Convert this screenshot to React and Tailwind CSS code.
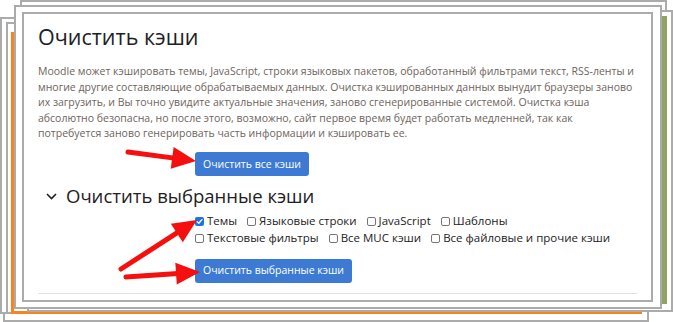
import React from "react";

function Box({ checked }) {
  if (checked) {
    return (
      <span className="inline-flex w-[9px] h-[9px] rounded-[2px] bg-[#1a73e8] items-center justify-center shrink-0">
        <svg width="7" height="7" viewBox="0 0 8 8">
          <path d="M1.3 4.2 L3.2 6 L6.8 1.8" fill="none" stroke="white" strokeWidth="1.5" strokeLinecap="round" strokeLinejoin="round" />
        </svg>
      </span>
    );
  }
  return <span className="inline-block w-[9px] h-[9px] rounded-[2px] border border-[#767676] bg-white shrink-0" />;
}

function Check({ label, checked }) {
  return (
    <span className="inline-flex items-center gap-[3px] whitespace-nowrap">
      <Box checked={checked} />
      <span>{label}</span>
    </span>
  );
}

function Arrow({ x1, y1, x2, y2 }) {
  const dx = x2 - x1, dy = y2 - y1;
  const len = Math.hypot(dx, dy);
  const ux = dx / len, uy = dy / len;
  const hl = 24, hw = 11;
  const bx = x2 - ux * hl, by = y2 - uy * hl;
  const px = -uy, py = ux;
  return (
    <g>
      <line x1={x1} y1={y1} x2={bx + ux * 2} y2={by + uy * 2} stroke="#f50f0f" strokeWidth="5" strokeLinecap="round" />
      <polygon points={`${x2},${y2} ${bx + px * hw},${by + py * hw} ${bx - px * hw},${by - py * hw}`} fill="#f50f0f" />
    </g>
  );
}

export default function App() {
  const frame = "absolute bg-white border-2 border-[#ababab]";
  return (
    <div className="relative w-[673px] h-[322px] overflow-hidden bg-white" style={{ fontFamily: "'Open Sans', 'Liberation Sans', sans-serif" }}>
      <div className={`${frame} left-[3px] top-[40px] w-[646px] h-[282px]`} />
      <div className={`${frame} left-0 top-[17px] w-[640px] h-[297px]`} />
      <div className={`${frame} left-[6px] top-[22px] w-[620px] h-[292px]`} />
      <div className="absolute left-[11px] top-[32px] w-[631px] h-[282px] bg-white border-l-[3px] border-b-[3px] border-[#f7841c]" />
      <div className={`${frame} left-[20px] top-0 w-[647px] h-[30px]`} />
      <div className={`${frame} left-[27px] top-[10px] w-[646px] h-[302px]`} />
      <div className="absolute left-[600px] top-[16px] w-[67px] h-[288px] bg-white border-r-[5px] border-[#8fa462]" />
      <div className={`${frame} left-[14px] top-[5px] w-[648px] h-[304px]`} />

      <div className={`${frame} left-[22px] top-[12px] w-[631px] h-[290px] px-[14px] pt-[8px]`}>
        <h1 className="text-[21.5px] leading-[30px] text-[#1d2125] font-normal">Очистить кэши</h1>
        <p className="mt-[12px] text-[10.5px] leading-[15.5px] text-[#6d645e] whitespace-nowrap">
          Moodle может кэшировать темы, JavaScript, строки языковых пакетов, обработанный фильтрами текст, RSS-ленты и<br />
          многие другие составляющие обрабатываемых данных. Очистка кэшированных данных вынудит браузеры заново<br />
          их загрузить, и Вы точно увидите актуальные значения, заново сгенерированные системой. Очистка кэша<br />
          абсолютно безопасна, но после этого, возможно, сайт первое время будет работать медленней, так как<br />
          потребуется заново генерировать часть информации и кэшировать ее.
        </p>
        <div className="mt-[8px] pl-[157px]">
          <button className="h-[24px] px-[8px] rounded-[3px] bg-[#3d7ad4] text-white text-[10.5px] font-medium">Очистить все кэши</button>
        </div>
        <div className="mt-[7px] flex items-center gap-[9px] pl-[8px]">
          <svg width="11" height="7" viewBox="0 0 11 7">
            <path d="M1 1 L5.5 5.5 L10 1" fill="none" stroke="#1d2125" strokeWidth="1.6" />
          </svg>
          <h2 className="text-[18.5px] leading-[26px] text-[#1d2125] font-normal">Очистить выбранные кэши</h2>
        </div>
        <div className="mt-[4px] pl-[157px] text-[11.5px] leading-[16px] text-[#1d2125] flex flex-col gap-[1px]">
          <div className="flex gap-[10px]">
            <Check label="Темы" checked />
            <Check label="Языковые строки" />
            <Check label="JavaScript" />
            <Check label="Шаблоны" />
          </div>
          <div className="flex gap-[10px]">
            <Check label="Текстовые фильтры" />
            <Check label="Все MUC кэши" />
            <Check label="Все файловые и прочие кэши" />
          </div>
        </div>
        <div className="mt-[10px] pl-[157px]">
          <button className="h-[24px] px-[8px] rounded-[3px] bg-[#3d7ad4] text-white text-[10.5px] font-medium">Очистить выбранные кэши</button>
        </div>
        <div className="mt-[10px] border-t border-[#dee2e6]" />
      </div>

      <svg className="absolute left-0 top-0 pointer-events-none" width="673" height="322">
        <Arrow x1={128} y1={152} x2={196} y2={161} />
        <Arrow x1={121} y1={269} x2={197} y2={220} />
        <Arrow x1={126} y1={277} x2={200} y2={272} />
      </svg>
    </div>
  );
}
